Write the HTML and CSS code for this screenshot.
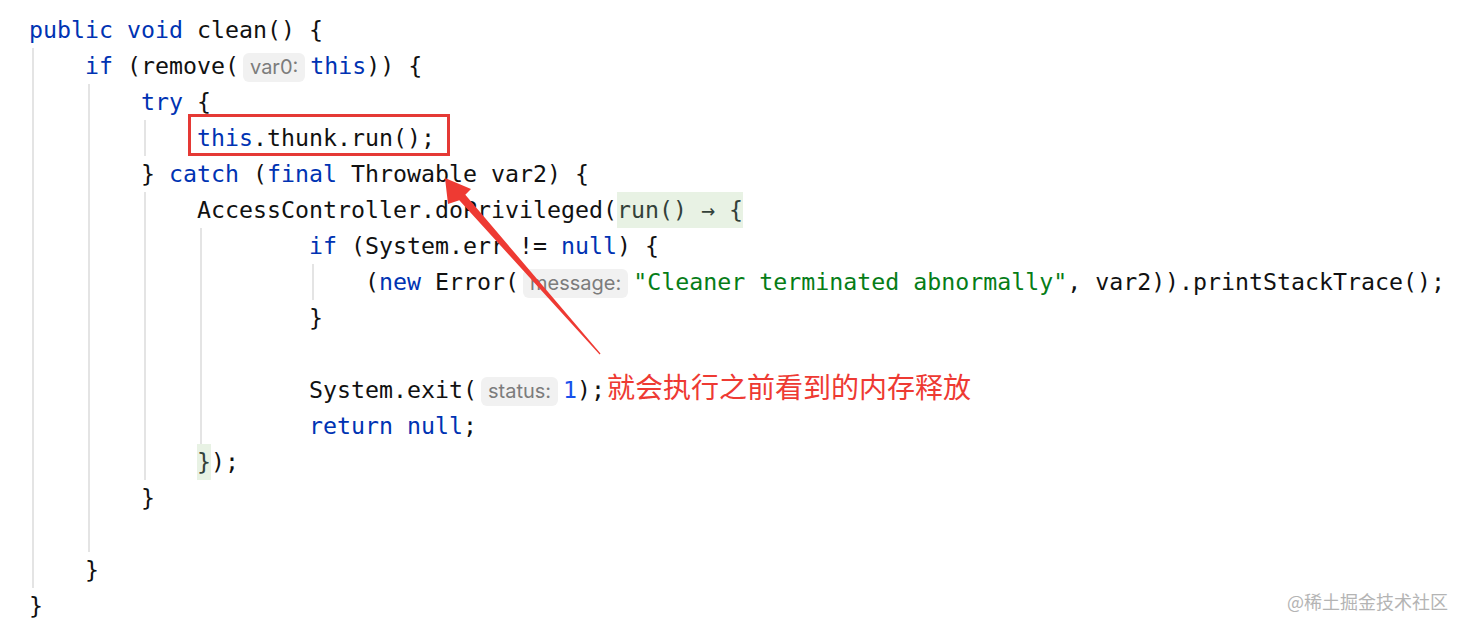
FILE: index.html
```html
<!DOCTYPE html>
<html lang="zh-CN">
<head>
<meta charset="utf-8">
<title>clean()</title>
<link rel="stylesheet" href="styles.css">
</head>
<body>
<div class="page">
  <div class="code">
    <div class="ln"><span class="kw">public</span> <span class="kw">void</span> clean() {</div>
    <div class="block">
      <div class="ln"><span class="kw">if</span> (remove(<span class="hint">var0:</span><span class="kw">this</span>)) {</div>
      <div class="block b2">
        <div class="ln"><span class="kw">try</span> {</div>
        <div class="block">
          <div class="ln"><span class="box"><span class="kw">this</span>.thunk.run();</span></div>
        </div>
        <div class="ln">} <span class="kw">catch</span> (<span class="kw">final</span> Throwable var2) {</div>
        <div class="block">
          <div class="ln">AccessController.doPrivileged(<span class="lam">run() → {</span></div>
          <div class="block wide">
            <div class="ln"><span class="kw">if</span> (System.err != <span class="kw">null</span>) {</div>
            <div class="block">
              <div class="ln">(<span class="kw">new</span> Error(<span class="hint">message:</span><span class="str">"Cleaner terminated abnormally"</span>, var2)).printStackTrace();</div>
            </div>
            <div class="ln">}</div>
            <div class="ln"></div>
            <div class="ln">System.exit(<span class="hint">status:</span><span class="num">1</span>);<span class="note">就会执行之前看到的内存释放</span></div>
            <div class="ln"><span class="kw">return</span> <span class="kw">null</span>;</div>
          </div>
          <div class="ln"><span class="lam">}</span>);</div>
        </div>
        <div class="ln">}</div>
        <div class="ln"></div>
      </div>
      <div class="ln">}</div>
    </div>
    <div class="ln">}</div>
  </div>

  <svg class="arrow" width="1467" height="631" viewBox="0 0 1467 631" aria-hidden="true">
    <polygon points="445,178 471,189 465.3,194.8 600.5,353.5 599.6,354.5 459.3,200.2 448,204" fill="#ee3a33"/>
  </svg>

  <div class="watermark">@稀土掘金技术社区</div>
</div>
</body>
</html>
```
FILE: styles.css
```css
html, body {
  margin: 0;
  padding: 0;
  background: #ffffff;
}

.page {
  position: relative;
  width: 1467px;
  height: 631px;
  overflow: hidden;
}

.code {
  padding: 12px 0 0 29px;
  font-family: "DejaVu Sans Mono", "Liberation Mono", monospace;
  font-size: 23.25px;
  color: #111111;
}

.ln {
  height: 36px;
  line-height: 36px;
  white-space: pre;
}

.block {
  margin-left: 3px;
  border-left: 2px solid #e4e4e4;
  padding-left: 51px;
}

.block.wide {
  padding-left: 107px;
}

.kw { color: #0033b3; }
.str { color: #067d17; }
.num { color: #1750eb; }

.hint {
  display: inline-block;
  font-family: Inter, "Noto Sans", sans-serif;
  font-size: 20px;
  line-height: 29px;
  color: #7c7c7c;
  background: #f1f1f1;
  border-radius: 6px;
  padding: 0 7px;
  margin: 0 5px 0 4px;
}

.lam {
  display: inline-block;
  line-height: 36px;
  background: #e8f2e4;
  color: #33413a;
}

.box {
  display: inline-block;
  line-height: 30px;
  border: 3px solid #e53935;
  padding: 6px 12px 0 6px;
  margin: -9px 0 -3px -9px;
}

.note {
  font-family: "Noto Sans CJK SC", "Noto Sans", sans-serif;
  font-size: 28px;
  line-height: 0;
  color: #ee3a33;
  margin-left: 2px;
}

.arrow {
  position: absolute;
  left: 0;
  top: 0;
  pointer-events: none;
}

.watermark {
  position: absolute;
  right: 19px;
  bottom: 19px;
  font-family: "Noto Sans CJK SC", "Noto Sans", sans-serif;
  font-size: 18px;
  line-height: 22px;
  color: #b4b4b4;
}
```
